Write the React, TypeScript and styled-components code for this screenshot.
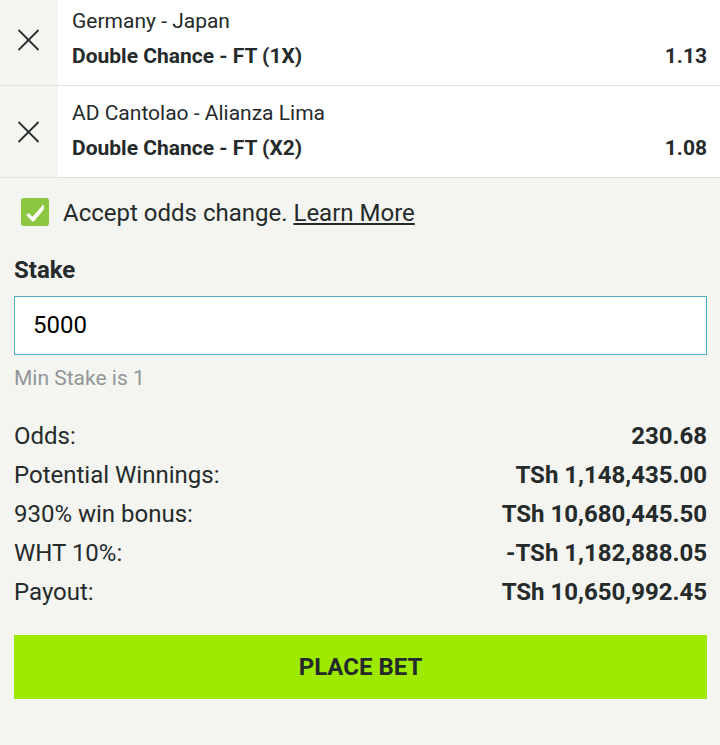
import React from "react";
import styled, { createGlobalStyle } from "styled-components";

const Global = createGlobalStyle`
  *, *::before, *::after { box-sizing: border-box; }
  body { margin: 0; background: #f4f5f0; color: #252a2b; font-family: Roboto, "Liberation Sans", sans-serif; }
  button, input { font: inherit; color: inherit; }
`;
const Slip = styled.main`overflow: hidden;`;
const List = styled.ul`list-style: none; margin: -6px 0 0; padding: 0;`;
const Selection = styled.li`
  display: flex;
  height: 92px;
  border-bottom: 1px solid #e0e1df;
  background: #fff;
`;
const Remove = styled.button`
  display: flex;
  align-items: center;
  justify-content: center;
  width: 58px;
  padding: 0;
  border: 0;
  background: #f4f5f0;
`;
const Details = styled.div`
  flex: 1;
  display: flex;
  flex-direction: column;
  justify-content: center;
  gap: 7px;
  padding: 0 13px 2px 14px;
  font-size: 21px;
  line-height: 28px;
`;
const Pick = styled.div`display: flex; justify-content: space-between; font-weight: 700;`;
const Form = styled.form`padding: 20px 13px 46px 14px;`;
const Accept = styled.div`
  display: flex;
  align-items: flex-start;
  padding-left: 7px;
  gap: 14px;
  font-size: 24px;
  line-height: 30px;
`;
const Tick = styled.span`
  position: relative;
  display: flex;
  width: 28px;
  height: 28px;
  input { appearance: none; margin: 0; width: 28px; height: 28px; border-radius: 3px; background: #c8ccc4; }
  input:checked { background: #8dc640; }
  svg { position: absolute; inset: 0; pointer-events: none; }
`;
const Link = styled.a`color: inherit; text-decoration-thickness: 2px; text-underline-offset: 2px;`;
const StakeLabel = styled.label`
  display: block;
  margin: 28px 0 12px;
  font-size: 24px;
  line-height: 28px;
  font-weight: 700;
`;
const StakeInput = styled.input`
  display: block;
  width: 100%;
  height: 59px;
  padding: 0 18px 2px;
  border: 1px solid #4fb0bd;
  border-radius: 0;
  background: #fff;
  color: #000;
  font-size: 24px;
  outline: none;
`;
const Hint = styled.p`margin: 9px 0 0; font-size: 21px; line-height: 28px; color: #919698;`;
const Totals = styled.dl`margin: 25px 0 23px;`;
const Total = styled.div`
  display: flex;
  justify-content: space-between;
  font-size: 24px;
  line-height: 39px;
  dd { margin: 0; font-weight: 700; }
`;
const PlaceBet = styled.button`
  width: 100%;
  height: 64px;
  border: 0;
  background: #9dea00;
  font-size: 24px;
  font-weight: 700;
`;

const selections = [
  { match: "Germany - Japan", pick: "Double Chance - FT (1X)", odds: "1.13" },
  { match: "AD Cantolao - Alianza Lima", pick: "Double Chance - FT (X2)", odds: "1.08" },
];
const totals = [
  ["Odds:", "230.68"],
  ["Potential Winnings:", "TSh 1,148,435.00"],
  ["930% win bonus:", "TSh 10,680,445.50"],
  ["WHT 10%:", "-TSh 1,182,888.05"],
  ["Payout:", "TSh 10,650,992.45"],
];

export default function App() {
  return (
    <Slip>
      <Global />
      <List>
        {selections.map((s) => (
          <Selection key={s.match}>
            <Remove type="button" aria-label={`Remove ${s.match}`}>
              <svg width="22" height="22" viewBox="0 0 22 22" fill="none" stroke="#252a2b" strokeWidth="1.8">
                <path d="M.5 1 20.5 21M20.5 1 .5 21" />
              </svg>
            </Remove>
            <Details>
              <div>{s.match}</div>
              <Pick><span>{s.pick}</span><span>{s.odds}</span></Pick>
            </Details>
          </Selection>
        ))}
      </List>
      <Form onSubmit={(e: React.FormEvent) => e.preventDefault()}>
        <Accept>
          <Tick>
            <input id="accept" type="checkbox" defaultChecked />
            <svg width="28" height="28" viewBox="0 0 28 28" fill="#fff">
              <path d="M5.2 17 8 15.2 11.6 18.8 21.8 7 23 7.4 22.8 11.6 13 23.2 11.4 23.6Z" />
            </svg>
          </Tick>
          <span><label htmlFor="accept">Accept odds change.</label> <Link href="#learn-more">Learn More</Link></span>
        </Accept>
        <StakeLabel htmlFor="stake">Stake</StakeLabel>
        <StakeInput id="stake" type="text" inputMode="numeric" defaultValue="5000" />
        <Hint>Min Stake is 1</Hint>
        <Totals>
          {totals.map(([name, value]) => (
            <Total key={name}><dt>{name}</dt><dd>{value}</dd></Total>
          ))}
        </Totals>
        <PlaceBet type="submit">PLACE BET</PlaceBet>
      </Form>
    </Slip>
  );
}
